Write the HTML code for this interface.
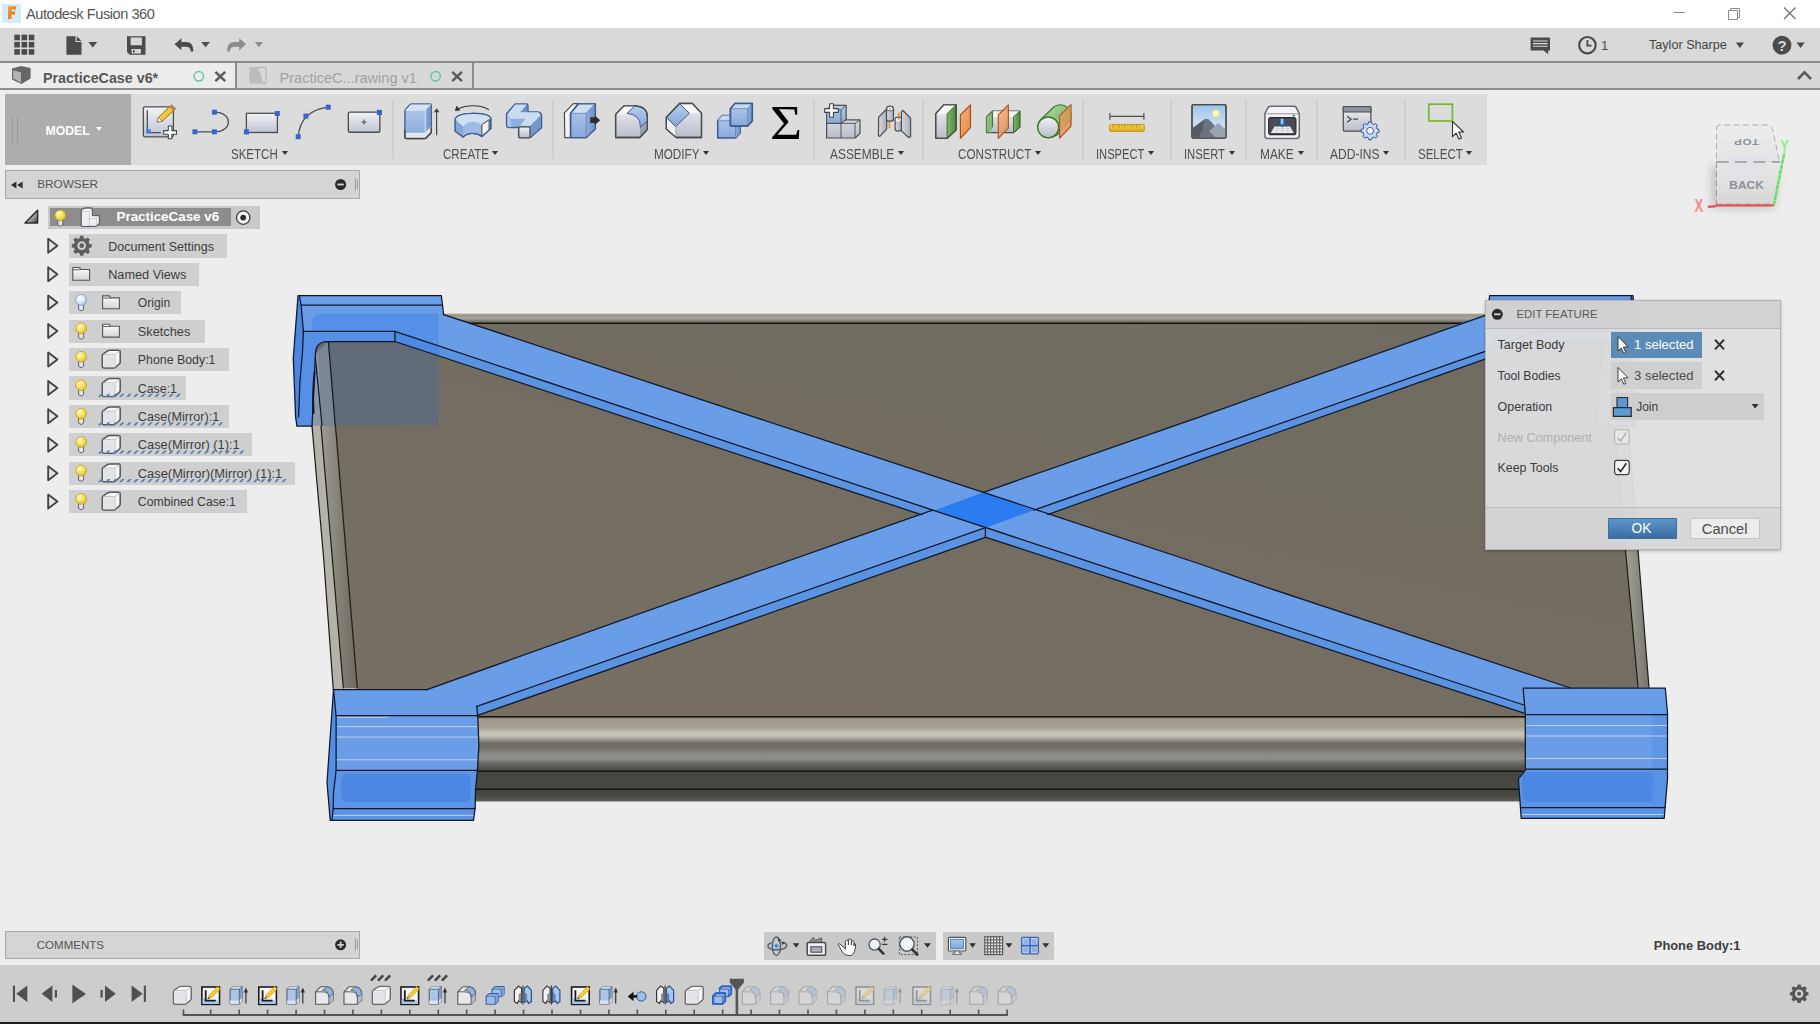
<!DOCTYPE html>
<html lang="en">
<head>
<meta charset="utf-8">
<title>Autodesk Fusion 360</title>
<style>
*{box-sizing:border-box;margin:0;padding:0}
html,body{width:1820px;height:1024px;overflow:hidden}
body{position:relative;background:#ededed;font-family:"Liberation Sans",sans-serif;color:#4a4a4a;font-size:12px}
.abs{position:absolute}
#titlebar{left:0;top:0;width:1820px;height:28px;background:#fff}
#titlebar .t{left:26px;top:4.2px;font-size:14.6px;color:#555;white-space:nowrap;line-height:20px}
#qat{left:0;top:28px;width:1820px;height:33px;background:#d9d9d9}
#qatline{left:0;top:61.2px;width:1820px;height:1.8px;background:#8a8a8a}
#tabbar{left:0;top:63px;width:1820px;height:25px;background:#d8d8d8}
#tabline{left:0;top:88px;width:1820px;height:1.5px;background:#8c8c8c}
#tab1{left:0;top:63px;width:235px;height:25px;background:#ececec}
.tabsep{top:63px;width:2px;height:25px;background:#8c8c8c}
.tabtxt{white-space:nowrap;line-height:20px}
#toolbar{left:5px;top:94px;width:1482.3px;height:71px;background:#dcdcdc}
#model{left:5px;top:94px;width:126px;height:71px;background:#adadad}
.tlabel{top:146.4px;font-size:14px;color:#4f4f4f;white-space:nowrap;line-height:16px;letter-spacing:0px}
.tsep{top:100px;width:2px;height:59px;background:#cfcfcf}
.caret{display:inline-block;width:0;height:0;border-left:4px solid transparent;border-right:4px solid transparent;border-top:5px solid #333;vertical-align:middle;margin-left:3px;position:relative;top:-2px}
#browserhdr{left:5px;top:170.4px;width:354.6px;height:28.2px;background:#d4d4d4;border:1px solid #a8a8a8}
#commentshdr{left:5px;top:930.8px;width:354.6px;height:28.4px;background:#d4d4d4;border:1px solid #a8a8a8}
.hdrtxt{font-size:12px;color:#555;line-height:16px;white-space:nowrap}
.row{height:22px;background:#cfcfcf}
.rowtxt{font-size:12px;color:#3c3c3c;white-space:nowrap;line-height:16px}
#timeline{left:0;top:965px;width:1820px;height:56.6px;background:#cdcdcd}
#bottomstrip{left:0;top:1021.6px;width:1820px;height:2.4px;background:#1e1e1e}
#dialog{left:1485px;top:300px;width:296px;height:250px;background:rgba(223,223,223,0.95);border:1px solid #b4b4b4;box-shadow:0 1px 3px rgba(0,0,0,0.25)}
.dlabel{font-size:12px;color:#3a3a3a;white-space:nowrap;line-height:16px}
#ttl{letter-spacing:-0.458px}
#usr{font-size:12.61px !important}
#t1{font-size:14.29px !important}
#t2{font-size:14.56px !important}
#modeltxt{font-size:12.24px !important}
#tl0{transform:scaleX(0.8222);transform-origin:0 0}
#tl1{transform:scaleX(0.8251);transform-origin:0 0}
#tl2{transform:scaleX(0.8356);transform-origin:0 0}
#tl3{transform:scaleX(0.8505);transform-origin:0 0}
#tl4{transform:scaleX(0.8340);transform-origin:0 0}
#tl5{transform:scaleX(0.7959);transform-origin:0 0}
#tl6{transform:scaleX(0.8005);transform-origin:0 0}
#tl7{transform:scaleX(0.8491);transform-origin:0 0}
#tl8{transform:scaleX(0.8617);transform-origin:0 0}
#tl9{transform:scaleX(0.8207);transform-origin:0 0}
#brtxt{font-size:11.78px !important}
#cmtxt{font-size:11.50px !important}
#roottxt{font-size:13.38px !important}
#r0{font-size:12.52px !important}
#r1{font-size:12.71px !important}
#r2{font-size:12.14px !important}
#r3{font-size:12.79px !important}
#r4{font-size:12.37px !important}
#r5{font-size:12.37px !important}
#r6{font-size:12.63px !important}
#r7{font-size:12.83px !important}
#r8{font-size:12.88px !important}
#r9{font-size:12.25px !important}
#dh{font-size:11.39px !important}
#d0{font-size:12.55px !important}
#d1{font-size:12.20px !important}
#d2{font-size:12.45px !important}
#d3{font-size:12.66px !important}
#d4{font-size:12.37px !important}
#s1{font-size:13.07px !important}
#s3{font-size:13.07px !important}
#jn{font-size:11.94px !important}
#okt{font-size:13.76px !important}
#cnt{font-size:14.68px !important}
#pb1{font-size:12.89px !important}
</style>
</head>
<body>
<svg class="abs" style="left:0;top:0" width="1820" height="1024" viewBox="0 0 1820 1024">
<defs>
<linearGradient id="gFace" x1="1" y1="0" x2="0.3" y2="1">
<stop offset="0" stop-color="#6e6b60"/><stop offset="0.5" stop-color="#736d61"/><stop offset="1" stop-color="#776f63"/>
</linearGradient>
<linearGradient id="gTop" x1="0" y1="0" x2="0" y2="1">
<stop offset="0" stop-color="#b9b7ae"/><stop offset="0.12" stop-color="#9c998d"/><stop offset="0.3" stop-color="#9a978b"/><stop offset="0.5" stop-color="#a9a8a2"/><stop offset="0.7" stop-color="#8a877c"/><stop offset="0.86" stop-color="#787367"/><stop offset="1" stop-color="#6f6a5f"/>
</linearGradient>
<linearGradient id="gCyl" x1="0" y1="0" x2="0" y2="1">
<stop offset="0" stop-color="#7a7468"/><stop offset="0.06" stop-color="#a39c8e"/><stop offset="0.19" stop-color="#a69f90"/><stop offset="0.3" stop-color="#c6c3bb"/><stop offset="0.33" stop-color="#cac7bf"/><stop offset="0.39" stop-color="#b0ada5"/><stop offset="0.5" stop-color="#6b675e"/><stop offset="0.57" stop-color="#74726a"/><stop offset="0.68" stop-color="#888a83"/><stop offset="0.77" stop-color="#8c8e87"/><stop offset="0.85" stop-color="#6a6963"/><stop offset="0.94" stop-color="#53514b"/><stop offset="1" stop-color="#4a4842"/>
</linearGradient>
<linearGradient id="gCyl2" x1="0" y1="0" x2="0" y2="1">
<stop offset="0" stop-color="#43413c"/><stop offset="0.5" stop-color="#494742"/><stop offset="0.85" stop-color="#58554e"/><stop offset="1" stop-color="#6a665e"/>
</linearGradient>
<linearGradient id="gLeft" x1="0" y1="0" x2="1" y2="0">
<stop offset="0" stop-color="#a5a39a"/><stop offset="1" stop-color="#6d685d"/>
</linearGradient>
<linearGradient id="gRight" x1="0" y1="0" x2="1" y2="0">
<stop offset="0" stop-color="#7d7a70"/><stop offset="0.5" stop-color="#a09e95"/><stop offset="1" stop-color="#77746a"/>
</linearGradient>
</defs>
<g stroke-linejoin="round">
<!-- phone top strip -->
<polygon points="318,313.5 1620,313.5 1620,323 318,323" fill="url(#gTop)"/>
<polygon points="318,313.5 1620,313.5 1620,323 318,323" fill="#7a7569" opacity="0"/>
<!-- phone main face -->
<polygon points="326,323 1606,323 1638.1,688 1640,717 360,717 357.4,688" fill="url(#gFace)"/>
<line x1="440" y1="323.2" x2="1490" y2="323.2" stroke="#15140f" stroke-width="1.4"/>
<!-- left side strips -->
<polygon points="311,345 317,345 343.4,688.5 333.3,690 323.8,560 312,426" fill="#b4b3aa"/>
<polygon points="315.2,352 328.4,341.7 357.4,688.5 343.4,688.5" fill="url(#gLeft)"/>
<path d="M312,426 L323.8,560 L333.3,690" fill="none" stroke="#1a1a16" stroke-width="1.2"/>
<path d="M315.2,358 L343.4,688.5" fill="none" stroke="#1a1a16" stroke-width="1.2"/>
<path d="M328.4,341.7 L357.4,688.5" fill="none" stroke="#1a1a16" stroke-width="1.2"/>
<!-- right side strip -->
<polygon points="1604.8,323 1619,315 1649,687.7 1638.1,687.7" fill="url(#gRight)"/>
<path d="M1604.8,323 L1625.6,551 L1638.1,687.7" fill="none" stroke="#1a1a16" stroke-width="1.2"/>
<path d="M1619,315 L1638.1,551 L1649,687.7" fill="none" stroke="#1a1a16" stroke-width="1.2"/>
<!-- cylinder bottom -->
<rect x="476" y="716.5" width="1050" height="55" fill="url(#gCyl)"/>
<rect x="475" y="771.4" width="1050" height="18" fill="#484640"/>
<rect x="474" y="789.2" width="1048" height="12.3" fill="url(#gCyl2)"/>
<line x1="476" y1="716.7" x2="1526" y2="716.7" stroke="#15140f" stroke-width="1.4"/>
<line x1="476" y1="771.2" x2="1526" y2="771.2" stroke="#15140f" stroke-width="1.4"/>
<line x1="475" y1="789.2" x2="1522" y2="789.2" stroke="#15140f" stroke-width="1.4"/>
</g>
<g stroke="none">
<!-- side faces -->
<polygon points="394.9,331.4 934.2,510.6 921.9,514.8 394.9,341.5" fill="#5b93e3"/>
<polygon points="986,527.7 1523.9,705 1523.9,713.2 986,537.3" fill="#5b93e3"/>
<polygon points="476.9,706.4 985.4,527.7 985.4,537.3 476.9,715.6" fill="#5b93e3"/>
<polygon points="1034,510.2 1484.4,351.6 1536.1,331.4 1536.1,341.5 1484.4,359.3 1047.7,514.6" fill="#5b93e3"/>
<!-- top faces -->
<polygon points="443.6,314.6 740,412.4 983.4,492.3 1200,564 1260,585.2 1570.4,688 1523.9,688 1523.9,705 394.9,331.4 394.9,320" fill="#6a9de8"/>
<polygon points="426.3,689.9 740,577.8 983.4,492.3 1200,416.8 1484.4,315.5 1487.4,314.6 1536.1,320 1536.1,331.4 1484.4,351.6 1200,451.7 1034,510.2 985.4,527.7 740,613.8 476.9,706.4 476.9,690" fill="#6a9de8"/>
<!-- crossing -->
<polygon points="983.4,492.3 1034,510.2 986,527.7 934.2,510.6" fill="#2b7cf0"/>
</g>
<!-- TOP-LEFT BLOCK -->
<g>
<polygon points="298,295.7 441.4,295.7 443.6,314.6 482,327.3 482,360.2 394.9,331.4 303.4,331.4 301.1,305" fill="#6a9de8"/>
<!-- L-shape inner/left -->
<path d="M298,295.7 L301.1,305 L303.4,331.4 L394.9,331.4 L394.9,341.5 L327,341.5 Q316,342 315.5,353 L312,426.1 L297,426.1 L295.6,417.5 L293.3,358.1 Z" fill="#5690e6"/>
<path d="M298,295.7 L293.3,358.1 L295.6,417.5 L297,426.1 L298.6,417 L300,381 L302.5,352 L303.4,331.4 L301.1,305 Z" fill="#4a86e2"/>
<!-- phone seen through (tinted) -->
<path d="M327,341.5 L438.5,341.5 L438.5,425.3 L312,425.3 L315.5,353 Q316,342 327,341.5 Z" fill="#616b78"/>
<polygon points="315.5,353 328.4,341.7 335.2,425.3 321,425.3" fill="#7b8693"/>
<polygon points="315.3,356 318,352 322,425.3 312.2,425.3" fill="#8b97a8"/>
<!-- darker tint on blue area -->
<path d="M312,331.4 L312,323 Q312,313.5 322,313.5 L438.5,313.5 L438.5,345.8 L394.9,331.4 Z" fill="#5690e6"/>
<polygon points="394.9,331.4 438.5,345.8 438.5,356 394.9,341.5" fill="#4c89e2"/>
<g fill="none" stroke="#101828" stroke-width="1.25" stroke-linejoin="round" stroke-linecap="round">
<path d="M297,426.1 L295.6,417.5 L293.3,358.1 L298,295.7 L441.4,295.7 L443.6,314.6"/>
<path d="M297,426.1 L312,426.1"/>
<path d="M301.1,305 L442.4,305"/>
<path d="M299.5,296.5 L301.1,305 L303.4,331.4 L302.5,352 L300,381 L298.6,417"/>
<path d="M303.4,331.4 L394.9,331.4 L394.9,341.5"/>
<path d="M394.9,341.5 L327,341.5 Q316,342 315.5,353 L312,426.1"/>
<path d="M328.4,341.7 L335.2,425.3" stroke="#0d1a2c"/>
<path d="M315.3,357 L322,425.3" stroke="#0d1a2c"/>
<path d="M314.6,372 Q312.2,395 313.6,413" stroke="#0a1630" stroke-width="2"/>
</g>
</g>
<!-- TOP-RIGHT BLOCK (behind dialog) -->
<g transform="translate(1931,0) scale(-1,1)">
<polygon points="298,295.7 441.4,295.7 443.6,314.6 482,327.3 482,360.2 394.9,331.4 303.4,331.4 301.1,305" fill="#6a9de8"/>
<!-- L-shape inner/left -->
<path d="M298,295.7 L301.1,305 L303.4,331.4 L394.9,331.4 L394.9,341.5 L327,341.5 Q316,342 315.5,353 L312,426.1 L297,426.1 L295.6,417.5 L293.3,358.1 Z" fill="#5690e6"/>
<path d="M298,295.7 L293.3,358.1 L295.6,417.5 L297,426.1 L298.6,417 L300,381 L302.5,352 L303.4,331.4 L301.1,305 Z" fill="#4a86e2"/>
<!-- phone seen through (tinted) -->
<path d="M327,341.5 L438.5,341.5 L438.5,425.3 L312,425.3 L315.5,353 Q316,342 327,341.5 Z" fill="#616b78"/>
<polygon points="315.5,353 328.4,341.7 335.2,425.3 321,425.3" fill="#7b8693"/>
<polygon points="315.3,356 318,352 322,425.3 312.2,425.3" fill="#8b97a8"/>
<!-- darker tint on blue area -->
<path d="M312,331.4 L312,323 Q312,313.5 322,313.5 L438.5,313.5 L438.5,345.8 L394.9,331.4 Z" fill="#5690e6"/>
<polygon points="394.9,331.4 438.5,345.8 438.5,356 394.9,341.5" fill="#4c89e2"/>
<g fill="none" stroke="#101828" stroke-width="1.25" stroke-linejoin="round" stroke-linecap="round">
<path d="M297,426.1 L295.6,417.5 L293.3,358.1 L298,295.7 L441.4,295.7 L443.6,314.6"/>
<path d="M297,426.1 L312,426.1"/>
<path d="M301.1,305 L442.4,305"/>
<path d="M299.5,296.5 L301.1,305 L303.4,331.4 L302.5,352 L300,381 L298.6,417"/>
<path d="M303.4,331.4 L394.9,331.4 L394.9,341.5"/>
<path d="M394.9,341.5 L327,341.5 Q316,342 315.5,353 L312,426.1"/>
<path d="M328.4,341.7 L335.2,425.3" stroke="#0d1a2c"/>
<path d="M315.3,357 L322,425.3" stroke="#0d1a2c"/>
<path d="M314.6,372 Q312.2,395 313.6,413" stroke="#0a1630" stroke-width="2"/>
</g>
</g>
<!-- BOTTOM-LEFT BLOCK -->
<g>
<path d="M333.5,689.5 L426.9,689.5 L456,680 L500,692 L476.7,706.4 L477.8,715.9 L478.9,745.9 L477.4,770.3 L475.5,789.8 L475.2,807.4 L473.5,820.3 L330.2,820.3 L327,782.5 Z" fill="#6a9de8"/>
<path d="M336.1,770.3 L477.4,770.3 L475.5,789.8 L475.2,808.6 L333.2,808.6 L333.5,792.7 Z" fill="#5c94e6"/>
<rect x="341" y="773.5" width="130" height="28.5" rx="7" fill="#4b88e3"/>
<path d="M333.2,808.6 L475.2,808.6 L473.5,820.3 L330.2,820.3 Z" fill="#5b93e5"/>
<path d="M333.5,689.5 L334.6,700.5 L336.1,715.9 L336.1,770.3 L333.5,792.7 L333.2,808.6 L332,819.8 L330.2,820.3 L327,782.5 Z" fill="#548fe5"/>
<g fill="none" stroke="#c3cddd" stroke-width="1">
<path d="M337,717.2 H388"/><path d="M337,726.6 H477.5"/><path d="M337,737.1 H478"/><path d="M337,759.8 H478"/><path d="M333,815.4 H474"/>
</g>
<g fill="none" stroke="#101828" stroke-width="1.25" stroke-linejoin="round" stroke-linecap="round">
<path d="M426.9,689.5 L333.5,689.5 L327,782.5 L330.2,820.3 L473.5,820.3 L475.2,807.4 L475.5,789.8 L477.4,770.3 L478.9,745.9 L477.8,715.9 L476.7,706.4"/>
<path d="M336.1,715.7 H477.8"/><path d="M336.1,770.3 H477.4"/><path d="M333.2,808.6 H475.2"/>
<path d="M333.5,689.5 L334.6,700.5 L336.1,715.9 L336.1,770.3 L333.5,792.7 L333.2,808.6 L332,819.8"/>
</g>
</g>
<!-- BOTTOM-RIGHT BLOCK -->
<g>
<path d="M1523.1,688 L1665.3,688 L1667.5,713 L1667.5,778.8 L1664.2,818.4 L1521.2,818.4 L1518.4,778.8 L1525.3,770.6 L1525.3,713 Z" fill="#6a9de8"/>
<path d="M1525.3,769.2 L1667.5,769.2 L1667.5,778.8 L1665,807.5 L1520.5,807.5 L1518.4,778.8 Z" fill="#5c94e6"/>
<rect x="1522" y="772" width="133" height="30" rx="7" fill="#4b88e3"/>
<path d="M1520.5,807.5 L1665,807.5 L1664.2,818.4 L1521.2,818.4 Z" fill="#5b93e5"/>
<path d="M1652,713 L1667.5,713 L1667.5,778.8 L1665,807.5 L1650,807.5 Q1654,790 1652,713 Z" fill="#5a93e6" opacity="0.7"/>
<g fill="none" stroke="#c3cddd" stroke-width="1">
<path d="M1526,725.5 H1667"/><path d="M1526,736 H1667"/><path d="M1526,758.5 H1667"/><path d="M1522,814.5 H1664"/>
</g>
<g fill="none" stroke="#101828" stroke-width="1.25" stroke-linejoin="round" stroke-linecap="round">
<path d="M1523.1,688 L1665.3,688 L1667.5,713 L1667.5,778.8 L1664.2,818.4 L1521.2,818.4 L1518.4,778.8 L1525.3,770.6 L1525.3,713 Z"/>
<path d="M1525.3,714.5 H1667.5"/><path d="M1525.3,769.2 H1667.5"/><path d="M1520.5,807.5 H1665"/>
</g>
</g>

<g fill="none" stroke="#101828" stroke-width="1.25" stroke-linecap="round">
<polyline points="443.6,314.6 740,412.4 983.4,492.3 1200,564 1260,585.2 1570.4,688"/>
<polyline points="394.9,331.4 934.2,510.6 986,527.7 1523.9,705"/>
<polyline points="394.9,341.5 921.9,514.8"/>
<polyline points="986,537.3 1523.9,713.2"/>
<polyline points="426.3,689.9 740,577.8 932.6,510.2"/><polyline points="983.4,492.3 1200,416.8 1487.4,314.6"/>
<polyline points="476.9,706.4 740,613.8 985.4,527.7 985.4,537.3"/>
<polyline points="1034,510.2 1200,451.7 1484.4,351.6 1536.1,331.4"/>
<polyline points="476.9,715.6 740,623.6 985.4,537.3"/>
<polyline points="1047.7,514.6 1200,459.9 1484.4,359.3 1536.1,341.5"/>
</g>

</svg>


<!-- TITLE BAR -->
<div id="titlebar" class="abs">
<svg class="abs" style="left:2px;top:4px" width="19" height="19" viewBox="0 0 19 19"><defs><linearGradient id="gF" x1="0" y1="0" x2="1" y2="1"><stop offset="0" stop-color="#f9a23a"/><stop offset="1" stop-color="#d96a12"/></linearGradient></defs><rect width="19" height="19" fill="#d3ebf6"/><path d="M6,2.2 L14,2.2 L14,5.4 L9.6,5.4 L9.6,7.6 L13,7.6 L13,10.6 L9.6,10.6 L9.6,14.6 L6,15.4 Z" fill="url(#gF)"/></svg>
<div class="abs t" id="ttl">Autodesk Fusion 360</div>
<svg class="abs" style="left:1668px;top:2px" width="140" height="24" viewBox="0 0 140 24" fill="none" stroke="#8a8a8a" stroke-width="1"><path d="M5.5,10.5 H17"/><path d="M60.5,8.5 H69.5 V17.5 H60.5 Z M62.5,8.5 V6.5 H71.5 V15.5 H69.5"/><path d="M116,5.5 L127.5,17 M127.5,5.5 L116,17" stroke="#6a6a6a" stroke-width="1.1"/></svg>
</div>
<!-- QAT -->
<div id="qat" class="abs"></div>
<div id="qatline" class="abs"></div>
<svg class="abs" style="left:0;top:28px" width="1820" height="33" viewBox="0 28 1820 33">
<g fill="#4b4b4b">
<rect x="14.3" y="34.7" width="5.6" height="5.6"/><rect x="21.5" y="34.7" width="5.6" height="5.6"/><rect x="28.7" y="34.7" width="5.6" height="5.6"/>
<rect x="14.3" y="41.9" width="5.6" height="5.6"/><rect x="21.5" y="41.9" width="5.6" height="5.6"/><rect x="28.7" y="41.9" width="5.6" height="5.6"/>
<rect x="14.3" y="49.1" width="5.6" height="5.6"/><rect x="21.5" y="49.1" width="5.6" height="5.6"/><rect x="28.7" y="49.1" width="5.6" height="5.6"/>
<path d="M66.4,36.2 H75.6 V42 H81.5 V54.7 H66.4 Z M76.8,36.2 L81.5,40.9 H76.8 Z"/>
<path d="M88.4,42 H97.2 L92.8,47.4 Z"/>
<path d="M127,36.2 H145.5 V54.7 H129.6 L127,52.1 Z M130.6,37.6 V45.2 H141.9 V37.6 Z M131.6,49 V53.4 H140.9 V49 Z" fill-rule="evenodd"/>
<rect x="133" y="50" width="1.6" height="2.6"/>
<path d="M174.5,44.2 L181.4,38.2 V42 H186 C191,42 193.3,44.6 193.3,51.6 H190.7 C190.5,47.8 189,46.7 185,46.7 H181.4 V50.2 Z"/>
<path d="M201.3,42 H210 L205.6,47.3 Z"/>
</g>
<g fill="#8c8c8c">
<path d="M246.1,44.2 L239.2,38.2 V42 H234.6 C229.6,42 227.3,44.6 227.3,51.6 H229.9 C230.1,47.8 231.6,46.7 235.6,46.7 H239.2 V50.2 Z"/>
<path d="M254.8,42 H263 L258.9,47.3 Z"/>
</g>
<!-- right side -->
<g fill="#4b4b4b">
<path d="M1530.6,37.4 H1550 V50.6 H1548.2 V54.3 L1543.6,50.6 H1530.6 Z"/>
<path d="M1735.8,42.5 H1744 L1739.9,48 Z"/>
<circle cx="1782" cy="45.2" r="9.4"/>
<path d="M1796.5,42.5 H1804.8 L1800.6,48 Z"/>
</g>
<g stroke="#d9d9d9" stroke-width="1.1"><path d="M1533,41 H1547.6 M1533,43.6 H1547.6 M1533,46.2 H1547.6"/></g>
<circle cx="1587.4" cy="45.2" r="8.2" fill="none" stroke="#4b4b4b" stroke-width="2.2"/>
<path d="M1587.4,40 V45.6 H1591.6" fill="none" stroke="#4b4b4b" stroke-width="1.8"/>
<text x="1601" y="50" font-size="13" fill="#4b4b4b" font-family="Liberation Sans, sans-serif">1</text>
<text x="1777.6" y="50.6" font-size="15" font-weight="bold" fill="#d9d9d9" font-family="Liberation Sans, sans-serif">?</text>
</svg>
<div class="abs" id="usr" style="left:1649px;top:36px;font-size:13px;color:#444;white-space:nowrap;line-height:18px">Taylor Sharpe</div>
<!-- TAB BAR -->
<div id="tabbar" class="abs"></div>
<div id="tab1" class="abs"></div>
<div class="abs tabsep" style="left:235px"></div>
<div class="abs tabsep" style="left:472px"></div>
<div id="tabline" class="abs"></div>
<svg class="abs" style="left:0;top:63px" width="1820" height="25" viewBox="0 63 1820 25">
<path d="M12,68.6 L21.4,66 L30.6,68 V78.6 L21.4,84 L12,79.4 Z" fill="#666"/>
<path d="M13.2,70.2 L21,72.6 V82.4 L13.2,78.6 Z" fill="#b4b4b4"/>
<circle cx="198.8" cy="76.3" r="4.7" fill="none" stroke="#5fc4ab" stroke-width="1.5"/>
<path d="M215.4,71.8 L225.2,81.2 M225.2,71.8 L215.4,81.2" stroke="#5a5a5a" stroke-width="2.4" fill="none"/>
<path d="M249.4,67 H258 L263.4,83.4 H249.4 Z" fill="#bcbcbc"/>
<path d="M258,67.4 H266 V83.4 H263" fill="none" stroke="#b0b0b0" stroke-width="1"/>
<circle cx="435.6" cy="76.3" r="4.7" fill="none" stroke="#5fc4ab" stroke-width="1.5"/>
<path d="M452.2,71.8 L462,81.2 M462,71.8 L452.2,81.2" stroke="#5a5a5a" stroke-width="2.4" fill="none"/>
<path d="M1798,79 L1804.5,72.4 L1811,79" stroke="#5a5a5a" stroke-width="2.6" fill="none"/>
</svg>
<div class="abs tabtxt" id="t1" style="left:43px;top:67.6px;font-size:15px;font-weight:bold;color:#585858">PracticeCase v6*</div>
<div class="abs tabtxt" id="t2" style="left:279.5px;top:67.8px;font-size:15px;color:#a2a2a2">PracticeC...rawing v1</div>
<div id="toolbar" class="abs"></div>
<div id="model" class="abs"></div>
<div class="abs" style="left:11.5px;top:115px;width:1.2px;height:28px;background:#999"></div><div class="abs" style="left:16.6px;top:115px;width:1.2px;height:28px;background:#999"></div>
<div class="abs" id="modeltxt" style="left:45.5px;top:122.5px;font-size:13px;font-weight:bold;color:#fff;white-space:nowrap;line-height:16px">MODEL</div>
<div class="abs" style="left:96.3px;top:127.4px;width:0;height:0;border-left:3.8px solid transparent;border-right:3.8px solid transparent;border-top:4.4px solid #fff"></div>
<div class="abs tsep" style="left:391.5px"></div>
<div class="abs tsep" style="left:551.6px"></div>
<div class="abs tsep" style="left:813.2px"></div>
<div class="abs tsep" style="left:922.3000000000001px"></div>
<div class="abs tsep" style="left:1082.2px"></div>
<div class="abs tsep" style="left:1169.9px"></div>
<div class="abs tsep" style="left:1245.4px"></div>
<div class="abs tsep" style="left:1315.9px"></div>
<div class="abs tsep" style="left:1403.6000000000001px"></div>
<div class="abs tlabel" id="tl0" style="left:231.3px">SKETCH</div>
<div class="abs" style="left:281.5px;top:150.8px;width:0;height:0;border-left:3.6px solid transparent;border-right:3.6px solid transparent;border-top:4.5px solid #333"></div>
<div class="abs tlabel" id="tl1" style="left:442.7px">CREATE</div>
<div class="abs" style="left:492.2px;top:150.8px;width:0;height:0;border-left:3.6px solid transparent;border-right:3.6px solid transparent;border-top:4.5px solid #333"></div>
<div class="abs tlabel" id="tl2" style="left:653.7px">MODIFY</div>
<div class="abs" style="left:702.6999999999999px;top:150.8px;width:0;height:0;border-left:3.6px solid transparent;border-right:3.6px solid transparent;border-top:4.5px solid #333"></div>
<div class="abs tlabel" id="tl3" style="left:829.8px">ASSEMBLE</div>
<div class="abs" style="left:897.5px;top:150.8px;width:0;height:0;border-left:3.6px solid transparent;border-right:3.6px solid transparent;border-top:4.5px solid #333"></div>
<div class="abs tlabel" id="tl4" style="left:958px">CONSTRUCT</div>
<div class="abs" style="left:1034.8000000000002px;top:150.8px;width:0;height:0;border-left:3.6px solid transparent;border-right:3.6px solid transparent;border-top:4.5px solid #333"></div>
<div class="abs tlabel" id="tl5" style="left:1096.2px">INSPECT</div>
<div class="abs" style="left:1148.0px;top:150.8px;width:0;height:0;border-left:3.6px solid transparent;border-right:3.6px solid transparent;border-top:4.5px solid #333"></div>
<div class="abs tlabel" id="tl6" style="left:1184.2px">INSERT</div>
<div class="abs" style="left:1228.6000000000001px;top:150.8px;width:0;height:0;border-left:3.6px solid transparent;border-right:3.6px solid transparent;border-top:4.5px solid #333"></div>
<div class="abs tlabel" id="tl7" style="left:1260.3px">MAKE</div>
<div class="abs" style="left:1297.5px;top:150.8px;width:0;height:0;border-left:3.6px solid transparent;border-right:3.6px solid transparent;border-top:4.5px solid #333"></div>
<div class="abs tlabel" id="tl8" style="left:1329.8px">ADD-INS</div>
<div class="abs" style="left:1382.9px;top:150.8px;width:0;height:0;border-left:3.6px solid transparent;border-right:3.6px solid transparent;border-top:4.5px solid #333"></div>
<div class="abs tlabel" id="tl9" style="left:1417.8px">SELECT</div>
<div class="abs" style="left:1466.0px;top:150.8px;width:0;height:0;border-left:3.6px solid transparent;border-right:3.6px solid transparent;border-top:4.5px solid #333"></div>
<svg class="abs" style="left:0;top:94px" width="1820" height="71" viewBox="0 94 1820 71">
<defs>
<linearGradient id="gPan" x1="0" y1="0" x2="0" y2="1"><stop offset="0" stop-color="#f2f3f7"/><stop offset="1" stop-color="#bfc4d2"/></linearGradient>
<linearGradient id="gBlu" x1="0" y1="0" x2="0" y2="1"><stop offset="0" stop-color="#b4cdec"/><stop offset="1" stop-color="#86a9da"/></linearGradient>
<linearGradient id="gBluS" x1="0" y1="0" x2="1" y2="0"><stop offset="0" stop-color="#8fb0de"/><stop offset="1" stop-color="#6c8fc6"/></linearGradient>
<linearGradient id="gGry" x1="0" y1="0" x2="0" y2="1"><stop offset="0" stop-color="#f0f1f4"/><stop offset="1" stop-color="#b9bdc9"/></linearGradient>
<linearGradient id="gGryS" x1="0" y1="0" x2="1" y2="0"><stop offset="0" stop-color="#d5d8e0"/><stop offset="1" stop-color="#a9adb9"/></linearGradient>
<linearGradient id="gGrn" x1="0" y1="0" x2="1" y2="0"><stop offset="0" stop-color="#7fb56a"/><stop offset="1" stop-color="#4f8f3c"/></linearGradient>
<linearGradient id="gOrg" x1="0" y1="0" x2="1" y2="1"><stop offset="0" stop-color="#f6b184"/><stop offset="1" stop-color="#e58544"/></linearGradient>
<linearGradient id="gSky" x1="0" y1="0" x2="0" y2="1"><stop offset="0" stop-color="#9cc4ec"/><stop offset="1" stop-color="#e8f1fa"/></linearGradient>
<linearGradient id="gYel" x1="0" y1="0" x2="0" y2="1"><stop offset="0" stop-color="#f7d54a"/><stop offset="1" stop-color="#e0a81c"/></linearGradient>
</defs>
<g transform="translate(142.8,105.2) scale(1.0)"><rect x="0.6" y="1.6" width="30" height="30" rx="1.5" fill="url(#gPan)" stroke="#4d4d4d" stroke-width="1.3"/>
<path d="M4.5,5 V27.5 H18" fill="none" stroke="#4d4d4d" stroke-width="1.3"/>
<rect x="3.6" y="24" width="4.2" height="4.2" fill="#3f7fe0"/>
<path d="M14.2,16.8 L15.6,12.2 L27,1.2 L31.2,5.2 L19.4,16 Z" fill="#f5c738" stroke="#7a5a1a" stroke-width="0.8"/>
<path d="M14.2,16.8 L15.6,12.2 L19.4,16 Z" fill="#fff" stroke="#7a5a1a" stroke-width="0.6"/>
<path d="M27,1.2 L28.8,-0.4 L33,3.6 L31.2,5.2 Z" fill="#d9884a" stroke="#7a5a1a" stroke-width="0.6"/>
<polygon points="25.5,20.8 29.1,20.8 29.1,25.4 33.7,25.4 33.7,29.0 29.1,29.0 29.1,33.6 25.5,33.6 25.5,29.0 20.9,29.0 20.9,25.4 25.5,25.4" fill="#fff" stroke="#444" stroke-width="1.1" stroke-linejoin="round"/></g>
<g transform="translate(193.4,109) scale(1.0)"><path d="M1.5,22.8 H21 C39.6,22.8 39.6,3.2 21,3.2" fill="none" stroke="#4d4d4d" stroke-width="1.3"/><rect x="-1.0" y="20.3" width="5.0" height="5.0" fill="#3a66cc"/><rect x="18.5" y="20.3" width="5.0" height="5.0" fill="#3a66cc"/><rect x="18.5" y="0.7000000000000002" width="5.0" height="5.0" fill="#3a66cc"/></g>
<g transform="translate(243.9,110.7) scale(1.0)"><rect x="2.5" y="2.6" width="31" height="19.2" fill="url(#gPan)" stroke="#4d4d4d" stroke-width="1.3"/><rect x="0.0" y="18.7" width="5.0" height="5.0" fill="#3a66cc"/><rect x="30.9" y="0.2999999999999998" width="5.0" height="5.0" fill="#3a66cc"/></g>
<g transform="translate(295.7,104.7) scale(1.0)"><path d="M2.5,32 C4,16 12,5 32.5,2.5" fill="none" stroke="#4d4d4d" stroke-width="1.3"/><rect x="0.0" y="29.5" width="5.0" height="5.0" fill="#3a66cc"/><rect x="7.699999999999999" y="8.9" width="5.0" height="5.0" fill="#3a66cc"/><rect x="30.0" y="0.0" width="5.0" height="5.0" fill="#3a66cc"/></g>
<g transform="translate(347.5,110.2) scale(1.03)"><rect x="0.8" y="1.8" width="30.6" height="19.6" rx="1.5" fill="url(#gPan)" stroke="#4d4d4d" stroke-width="1.3"/><path d="M16,9 V14 M13.5,11.5 H18.5" stroke="#4d4d4d" stroke-width="1"/><rect x="28.5" y="-0.2999999999999998" width="5.0" height="5.0" fill="#3a66cc"/></g>
<g transform="translate(404.6,104.5) scale(0.985)"><path d="M0.3,7 Q0.3,5.8 1.2,4.9 L5.2,0.4 Q6,-0.6 7.2,-0.6 H25.8 Q27.1,-0.6 27.1,0.8 V27.4 Q27.1,28.4 26.4,29.2 L22.2,33.6 Q21.4,34.6 20,34.6 H1.8 Q0.3,34.6 0.3,33 Z" fill="url(#gBlu)" stroke="#4a6490" stroke-width="1.5" stroke-linejoin="round"/>
<path d="M1,5.8 L6.3,0 H26.4 L21,5.8 Z" fill="#d4e3f5"/>
<path d="M21,5.8 L26.4,0 V28 L21,34 Z" fill="url(#gBluS)"/>
<path d="M1,28.7 H21 L26.4,22.6 V28 L21,34 H1 Z" fill="#e4e7ee"/>
<path d="M1,5.8 H21 V34 M21,5.8 L26.4,0" fill="none" stroke="#dbe7f6" stroke-width="0.9"/>
<path d="M0.3,26 V33 Q0.3,34.6 1.8,34.6 H20 Q21.4,34.6 22.2,33.6 L26.4,29.2 Q27.1,28.4 27.1,27.4 V24" fill="none" stroke="#444" stroke-width="1.5" stroke-linejoin="round"/>
<path d="M32.5,31.2 V6" stroke="#444" stroke-width="1.2"/><path d="M29.6,7.9 L32.5,3.8 L35.6,7.9 Z" fill="#444"/></g>
<g transform="translate(454.6,104.6) scale(1.0)"><path d="M34.2,5.2 C26,0 12,0 3.6,4.4" fill="none" stroke="#333" stroke-width="1.1"/><path d="M0.2,6.5 L1.9,0.9 L5.8,5.8 Z" fill="#333"/>
<path d="M0.6,14.1 C4,7.2 33,7.2 36.2,13.4 V24 L27.3,31.9 C22,27.6 13,27.8 8.5,32.5 L0.6,26.6 Z" fill="#a3c1e7" stroke="#3f5f94" stroke-width="1.3" stroke-linejoin="round"/>
<path d="M0.6,14.1 C4,7.2 33,7.2 36.2,13.4 L27.3,20 C22,15.4 13,15.6 8.5,21.3 Z" fill="#cfe0f3"/>
<path d="M0.6,14.1 L8.5,21.3 V32.5 L0.6,26.6 Z" fill="#86a8d8"/>
<path d="M8.5,21.3 C13,15.6 22,15.4 27.3,20 V31.9 C22,27.6 13,27.8 8.5,32.5 Z" fill="#9dbce5"/>
<path d="M27.3,20 L34.5,15.1 V25.3 L27.3,31.9 Z" fill="#f4f4f6" stroke="#444" stroke-width="1"/>
<path d="M0.6,14.1 L8.5,21.3 C13,15.6 22,15.4 27.3,20" fill="none" stroke="#dbe8f7" stroke-width="0.9"/>
<path d="M0.6,14.1 C4,7.2 33,7.2 36.2,13.4 V24 L27.3,31.9 C22,27.6 13,27.8 8.5,32.5 L0.6,26.6 Z" fill="none" stroke="#3f5f94" stroke-width="1.2" stroke-linejoin="round"/></g>
<g transform="translate(505.9,104) scale(1.0)"><path d="M9.3,0 H20.6 Q22,0 22,1.4 V7.9 H32 Q35.6,8.6 35.6,12 V23.6 L25.1,33 H12.8 V23.6 H3.4 Q0.7,23.4 0.7,21 V9.8 Z" fill="#8fb0de" stroke="#3f5f94" stroke-width="1.5" stroke-linejoin="round"/>
<path d="M9.3,0.4 H21.1 L14.2,8.2 H32.3 Q34.6,9.4 34.3,11.8 L24.4,21.7 H13.9 L19.8,14.7 H5.3 L1.6,10.4 Z" fill="#c9dcf3"/>
<path d="M21.1,0.6 L21.6,7.9 H14.6 Z" fill="#6c8fc6"/>
<path d="M34.6,12 L34.9,23.4 L25.1,32.4 L24.4,22 Z" fill="#7395cc"/>
<path d="M1.4,10.6 L5.3,14.7 V23 H3 Q1.4,22.6 1.4,21 Z" fill="#a9c5ea"/>
<rect x="12.9" y="22.8" width="11.2" height="11" rx="0.8" fill="url(#gGry)" stroke="#444" stroke-width="1.2"/></g>
<g transform="translate(564,104) scale(1.0)"><path d="M0.4,8.8 L9.4,-0.4 H14 L6.4,9.3 V33.6 H0.8 Z" fill="#f4f5f7" stroke="#4a4a4a" stroke-width="1.2" stroke-linejoin="round"/>
<path d="M6.6,9.3 L14.7,-0.2 H31.4 V24.9 L22.2,33.6 H6.6 Z" fill="url(#gBlu)" stroke="#3f5a8c" stroke-width="1.3" stroke-linejoin="round"/>
<path d="M6.6,9.3 L14.7,-0.2 H31.4 L22.2,9.3 Z" fill="#cfe0f4"/>
<path d="M22.2,9.3 L31.4,-0.2 V24.9 L22.2,33.6 Z" fill="url(#gBluS)"/>
<path d="M6.6,9.3 H22.2 V33.6 M22.2,9.3 L31.4,-0.2" fill="none" stroke="#5f7fb4" stroke-width="0.8"/>
<path d="M6.6,9.3 L14.7,-0.2 H31.4 V24.9 L22.2,33.6 H6.6 Z" fill="none" stroke="#3f5a8c" stroke-width="1.3" stroke-linejoin="round"/>
<path d="M26.2,13.3 H30.8 V11.4 L36.2,16.2 L30.8,21 V19.1 H26.2 Z" fill="#2e2e2e"/></g>
<g transform="translate(615,104.4) scale(1.0)"><path d="M0.6,10.1 L9.2,1.4 H20.8 Q32.3,2.4 32.3,12.4 V25.1 L24.8,33.1 H0.6 Z" fill="url(#gGry)" stroke="#4a4a4a" stroke-width="1.3" stroke-linejoin="round"/>
<path d="M0.6,10.1 L9.2,1.4 H19.6 L12.1,8.9 Q10,10.2 0.6,10.1 Z" fill="#f7f7f9"/>
<path d="M25,22.4 L32.3,16.6 V25.1 L24.8,33.1 Z" fill="#9aa0ac"/>
<path d="M12.1,8.9 L19.6,1.6 Q32.3,2.2 32.3,12.4 V16.6 L25.4,22.8 Q25.6,10.2 12.1,8.9 Z" fill="url(#gBlu)" stroke="#3f5a8c" stroke-width="1" stroke-linejoin="round"/>
<path d="M0.6,10.1 L9.2,1.4 H20.8 Q32.3,2.4 32.3,12.4 V25.1 L24.8,33.1 H0.6 Z" fill="none" stroke="#4a4a4a" stroke-width="1.3" stroke-linejoin="round"/></g>
<g transform="translate(665.6,103.6) scale(1.0)"><path d="M0.75,13.7 L14,-0.1 H26.7 L35.9,9.7 V33.9 H10.6 L0.75,25.3 Z" fill="url(#gGry)" stroke="#4a4a4a" stroke-width="1.3" stroke-linejoin="round"/>
<path d="M14,-0.1 H26.7 L35.9,9.7 H23.8 Z" fill="#f7f7f9"/>
<path d="M0.75,13.7 L10,23 L10.6,33.9 L0.75,25.3 Z" fill="#eef0f4"/>
<path d="M0.75,13.7 L14,0.2 L23.8,9.7 L10,23 Z" fill="url(#gBlu)" stroke="#3f5a8c" stroke-width="1" stroke-linejoin="round"/>
<path d="M10,23 L10.6,33.9" fill="none" stroke="#9a9ea8" stroke-width="0.8"/>
<path d="M0.75,13.7 L14,-0.1 H26.7 L35.9,9.7 V33.9 H10.6 L0.75,25.3 Z" fill="none" stroke="#4a4a4a" stroke-width="1.3" stroke-linejoin="round"/></g>
<g transform="translate(717.4,104) scale(1.0)"><path d="M0.3,16.8 L4.9,11.6 H22.8 V28.9 L18.2,34.1 H0.3 Z" fill="url(#gBlu)" stroke="#3f5a8c" stroke-width="1.5" stroke-linejoin="round"/>
<path d="M0.3,16.8 L4.9,11.6 H22.8 L18.2,16.8 Z" fill="#c5d9f2"/><path d="M18.2,16.8 L22.8,11.6 V28.9 L18.2,34.1 Z" fill="url(#gBluS)"/>
<path d="M0.3,16.8 H18.2 V34.1" fill="none" stroke="#5f7fb4" stroke-width="0.8"/>
<path d="M13,4.7 L17.6,-0.5 H34.9 V16.8 L30.3,22 H13 Z" fill="url(#gBlu)" stroke="#3f5a8c" stroke-width="1.5" stroke-linejoin="round"/>
<path d="M13,4.7 L17.6,-0.5 H34.9 L30.3,4.7 Z" fill="#c5d9f2"/><path d="M30.3,4.7 L34.9,-0.5 V16.8 L30.3,22 Z" fill="url(#gBluS)"/>
<path d="M13,4.7 H30.3 V22 M30.3,4.7 L34.9,-0.5" fill="none" stroke="#5f7fb4" stroke-width="0.8"/>
<path d="M13,4.7 L17.6,-0.5 H34.9 V16.8 L30.3,22 H13 Z" fill="none" stroke="#3f5a8c" stroke-width="1.5" stroke-linejoin="round"/></g>
<g transform="translate(771.3,105) scale(1.0)"><g transform="scale(1.2,1.06)"><text x="-1" y="31.8" font-family="Liberation Serif, serif" font-size="46" fill="#000">Σ</text></g></g>
<g transform="translate(824.6,103.4) scale(1.0)"><path d="M2,6.6 L7,2 H21.4 V16.4 H35.4 V30 L30.4,34.6 H2 Z" fill="url(#gGry)" stroke="#4d4d4d" stroke-width="1.2" stroke-linejoin="round"/>
<path d="M2,6.6 L7,2 H21.4 V16.4 L16.4,20 H2 Z" fill="url(#gBlu)" stroke="#4d4d4d" stroke-width="0.9"/>
<path d="M2,20 H30.4 V34.6 M16.4,20 V34.6 M30.4,20 L35.4,16.4 M16.4,20 L21.4,16.4 M16.4,6.6 V20 M2,6.6 H16.4 L21.4,2" fill="none" stroke="#4d4d4d" stroke-width="0.9"/>
<polygon points="5.0,0.3 8.8,0.3 8.8,5.2 13.7,5.2 13.7,9.0 8.8,9.0 8.8,13.9 5.0,13.9 5.0,9.0 0.1,9.0 0.1,5.2 5.0,5.2" fill="#fff" stroke="#444" stroke-width="1.1" stroke-linejoin="round"/></g>
<g transform="translate(877.8,104.6) scale(1.0)"><path d="M0.8,12.5 L8.9,4.4 V24.4 L2.1,31.8 L0.6,31 Z" fill="url(#gGryS)" stroke="#4d4d4d" stroke-width="1.2" stroke-linejoin="round"/>
<path d="M8.7,4 Q8.7,1.4 12.2,1.4 Q15.7,1.4 15.7,4 V14.6 Q15.7,16.6 12.2,16.6 Q8.7,16.6 8.7,14.6 Z" fill="url(#gGryS)" stroke="#4d4d4d" stroke-width="1.2"/>
<ellipse cx="12.2" cy="4" rx="3.2" ry="2.2" fill="#fafafa" stroke="#4d4d4d" stroke-width="0.8"/><circle cx="12.2" cy="4" r="0.7" fill="#444"/>
<path d="M11.6,17.4 V23.6" stroke="#f58220" stroke-width="1.5"/>
<path d="M23.6,7.2 L25.2,5.9 L32.8,13.5 V32.3 L30.8,32.9 L23.6,26.3 Z" fill="url(#gGryS)" stroke="#4d4d4d" stroke-width="1.2" stroke-linejoin="round"/>
<path d="M17.3,15 Q17.3,12.6 20.5,12.6 Q23.6,12.6 23.6,15 V24.4 Q23.6,26.6 20.5,26.6 Q17.3,26.6 17.3,24.4 Z" fill="url(#gGryS)" stroke="#4d4d4d" stroke-width="1.2"/>
<ellipse cx="20.5" cy="15" rx="2.8" ry="1.8" fill="#f4f4f6"/>
<path d="M20.9,8.2 V15.1" stroke="#f58220" stroke-width="1.5"/></g>
<g transform="translate(935.2,104.6) scale(1.0)"><path d="M0.5,9.1 L8.8,0.2 H20.8 V25.5 L11.9,33.7 H0.5 Z" fill="url(#gGry)" stroke="#4a4a4a" stroke-width="1.3" stroke-linejoin="round"/>
<path d="M0.5,9.1 L8.8,0.2 H20.8 L11.9,9.1 Z" fill="#fafafb"/>
<path d="M11.9,9.1 L20.8,0.2 V25.5 L11.9,33.7 Z" fill="url(#gGrn)" stroke="#2f6b24" stroke-width="0.9" stroke-linejoin="round"/>
<path d="M0.5,9.1 L8.8,0.2 H20.8 V25.5 L11.9,33.7 H0.5 Z" fill="none" stroke="#4a4a4a" stroke-width="1.3" stroke-linejoin="round"/>
<path d="M25.2,10.4 L35.3,0.2 V23 L25.2,33.7 Z" fill="url(#gOrg)" stroke="#a8501a" stroke-width="1.2" stroke-linejoin="round"/></g>
<g transform="translate(985.8,104.6) scale(1.0)"><path d="M0.7,12.3 L6.8,6.6 H34 V22.4 L27.7,28 H0.7 Z" fill="url(#gGry)" stroke="#4a4a4a" stroke-width="1.2" stroke-linejoin="round"/>
<path d="M0.7,12.3 L6.8,6.6 H34 L27.7,12.3 Z" fill="#f7f7f9"/>
<path d="M27.7,12.3 L34,6.6 V22.4 L27.7,28 Z" fill="url(#gGrn)" stroke="#2f6b24" stroke-width="0.9" stroke-linejoin="round"/>
<path d="M0.7,12.3 L6.8,6.6 V22.4 L0.7,28 Z" fill="url(#gGrn)" fill-opacity="0.75" stroke="#2f6b24" stroke-width="0.9" stroke-linejoin="round"/>
<path d="M0.7,12.3 H6 V28 H0.7 Z" fill="#8fbf7c" fill-opacity="0.6"/>
<path d="M12.5,10.4 L22.6,0.2 V23.6 L12.5,33.7 Z" fill="url(#gOrg)" fill-opacity="0.82" stroke="#b5571c" stroke-width="1.2" stroke-linejoin="round"/></g>
<g transform="translate(1037,104.4) scale(1.0)"><defs><linearGradient id="gGrnL" x1="0" y1="0" x2="1" y2="1"><stop offset="0" stop-color="#c2deb2"/><stop offset="1" stop-color="#5f9d4a"/></linearGradient></defs>
<path d="M3.4,15.6 L17,2.4 Q24,-2 30.6,3 Q35.4,8 33.4,15 L20.4,30.4 Q10,37 2.6,28 Q-1.4,21 3.4,15.6 Z" fill="url(#gGrnL)" stroke="#3a7a2c" stroke-width="1.2"/>
<circle cx="11.2" cy="23" r="10.4" fill="url(#gGry)" stroke="#3a7a2c" stroke-width="1.3"/>
<path d="M22.6,11.6 L34,0.2 V21.7 L22.6,33.7 Z" fill="url(#gOrg)" fill-opacity="0.85" stroke="#a8501a" stroke-width="1.2" stroke-linejoin="round"/>
<path d="M22.6,11.6 L34,0.2 V13 L22.6,24 Z" fill="#b9a24a" fill-opacity="0.45"/></g>
<g transform="translate(1108.9,112.4) scale(1.0)"><path d="M1,4 H35 M1,0.6 V7.4 M35,0.6 V7.4" stroke="#4d4d4d" stroke-width="1.2" fill="none"/>
<rect x="0.6" y="12" width="34.8" height="7" rx="1" fill="url(#gYel)" stroke="#b98a14" stroke-width="0.8"/>
<path d="M4,12.4 V15 M7,12.4 V14 M10,12.4 V15 M13,12.4 V14 M16,12.4 V15 M19,12.4 V14 M22,12.4 V15 M25,12.4 V14 M28,12.4 V15 M31,12.4 V14" stroke="#8a6a10" stroke-width="0.7"/></g>
<g transform="translate(1191.3,103.9) scale(1.0)"><rect x="0.7" y="0.7" width="34" height="33.6" rx="1.5" fill="url(#gSky)" stroke="#4d4d4d" stroke-width="1.3"/>
<circle cx="24.6" cy="9.6" r="3.4" fill="#fdf6c8" stroke="#f3e089" stroke-width="1.2"/>
<path d="M1.4,33.6 V24 L14,15 Q17,14 19,17 L34,33.6 Z" fill="#6d727d"/>
<path d="M14,15 Q10,22 12,26 Q8,29 8,33.6 H1.4 V24 Z" fill="#555a64"/>
<path d="M18,27 L27,19 L34,25 V33.6 H24 Z" fill="#9aa3b2"/>
<rect x="0.7" y="0.7" width="34" height="33.6" rx="1.5" fill="none" stroke="#4d4d4d" stroke-width="1.3"/></g>
<g transform="translate(1264.1,105.2) scale(1.0)"><path d="M3.4,3.4 Q3.8,1 6.4,1 H29.6 Q32.2,1 32.6,3.4 L35.2,8.4 V30.6 Q35.2,33.2 32.6,33.2 H3.4 Q0.8,33.2 0.8,30.6 V8.4 Z" fill="#f3f3f5" stroke="#666b74" stroke-width="1.5" stroke-linejoin="round"/>
<path d="M0.8,8.6 H35.2" stroke="#8a8f98" stroke-width="0.9"/>
<rect x="4.6" y="12.4" width="27.2" height="17" rx="2.2" fill="#4a4d55" stroke="#2a2c30" stroke-width="1.2"/>
<path d="M10.4,21.4 H26 L29.6,27.8 H6.8 Z" fill="#f0f0f2"/>
<path d="M9.6,23.4 H27.2 M8.6,25.6 H28.4 M14,21.4 L12.4,27.8 M18.2,21.4 V27.8 M22.4,21.4 L24,27.8" stroke="#b4b6bc" stroke-width="0.5"/>
<path d="M15.2,13.4 H21.2 V18.4 L18.2,22 L15.2,18.4 Z" fill="#3f73c4" stroke="#1e3f7a" stroke-width="0.7"/>
<path d="M16.8,13.6 H19 V18.6 H16.8 Z" fill="#a9c8f2"/>
<circle cx="29.6" cy="10.4" r="1.1" fill="#168a22"/></g>
<g transform="translate(1342.5,105.6) scale(1.0)"><rect x="0.8" y="1" width="27.6" height="24.6" rx="1.5" fill="url(#gGry)" stroke="#4d4d4d" stroke-width="1.2"/>
<rect x="0.8" y="1" width="27.6" height="5.4" fill="#8d929c" stroke="#4d4d4d" stroke-width="1"/>
<path d="M4.6,10.6 L8.6,13.6 L4.6,16.6 M10.6,13.6 H15.6" fill="none" stroke="#444" stroke-width="1.2"/>
<g transform="translate(27.6,25.2)"><path d="M-1.3,-9 H1.3 L2,-6.9 L3.6,-6.2 L5.5,-7.3 L7.3,-5.5 L6.2,-3.6 L6.9,-2 L9,-1.3 V1.3 L6.9,2 L6.2,3.6 L7.3,5.5 L5.5,7.3 L3.6,6.2 L2,6.9 L1.3,9 H-1.3 L-2,6.9 L-3.6,6.2 L-5.5,7.3 L-7.3,5.5 L-6.2,3.6 L-6.9,2 L-9,1.3 V-1.3 L-6.9,-2 L-6.2,-3.6 L-7.3,-5.5 L-5.5,-7.3 L-3.6,-6.2 L-2,-6.9 Z" fill="#c9d8f4" stroke="#2f4f9a" stroke-width="1" stroke-linejoin="round"/><circle r="3.4" fill="#fff" stroke="#2f4f9a" stroke-width="0.9"/></g></g>
<g transform="translate(1427.9,103.1) scale(1.0)"><rect x="0.9" y="1.1" width="23.6" height="16.8" fill="none" stroke="#78b62c" stroke-width="1.7"/>
<path d="M24.6,18.4 L24.6,33.6 L28.2,30 L31,36 L33.6,34.8 L30.8,29 L35.6,28.8 Z" fill="#fff" stroke="#333" stroke-width="1.1" stroke-linejoin="round"/></g>
</svg>
<div id="browserhdr" class="abs"></div>
<div class="abs hdrtxt" id="brtxt" style="left:37.2px;top:176.2px">BROWSER</div>
<div id="commentshdr" class="abs"></div>
<div class="abs hdrtxt" id="cmtxt" style="left:36.8px;top:936.6px">COMMENTS</div>
<div class="abs" style="left:47.6px;top:205.7px;width:212.8px;height:23px;background:#c9c9c9"></div>
<div class="abs" style="left:50.1px;top:208.2px;width:180.6px;height:18px;background:#8d8d8d"></div>
<div class="abs" id="roottxt" style="left:116.5px;top:209.2px;font-size:13px;font-weight:bold;color:#fff;white-space:nowrap;line-height:16px">PracticeCase v6</div>
<div class="abs row" style="left:68.9px;top:234.3px;width:158.3px;height:23.3px"></div>
<div class="abs rowtxt" id="r0" style="left:108.2px;top:238.5px">Document Settings</div>
<div class="abs row" style="left:68.9px;top:262.7px;width:129.9px;height:23.3px"></div>
<div class="abs rowtxt" id="r1" style="left:108.2px;top:266.9px">Named Views</div>
<div class="abs row" style="left:68.9px;top:291.1px;width:112.1px;height:23.3px"></div>
<div class="abs rowtxt" id="r2" style="left:137.8px;top:295.3px">Origin</div>
<div class="abs row" style="left:68.9px;top:319.5px;width:135.7px;height:23.3px"></div>
<div class="abs rowtxt" id="r3" style="left:137.8px;top:323.7px">Sketches</div>
<div class="abs row" style="left:68.9px;top:348.0px;width:159.7px;height:23.3px"></div>
<div class="abs rowtxt" id="r4" style="left:137.8px;top:352.2px">Phone Body:1</div>
<div class="abs row" style="left:68.9px;top:376.4px;width:116.9px;height:23.3px"></div>
<div class="abs rowtxt" id="r5" style="left:137.8px;top:380.6px">Case:1</div>
<div class="abs row" style="left:68.9px;top:404.8px;width:159.7px;height:23.3px"></div>
<div class="abs rowtxt" id="r6" style="left:137.8px;top:409.0px">Case(Mirror):1</div>
<div class="abs row" style="left:68.9px;top:433.2px;width:183.1px;height:23.3px"></div>
<div class="abs rowtxt" id="r7" style="left:137.8px;top:437.4px">Case(Mirror) (1):1</div>
<div class="abs row" style="left:68.9px;top:461.7px;width:225.9px;height:23.3px"></div>
<div class="abs rowtxt" id="r8" style="left:137.8px;top:465.9px">Case(Mirror)(Mirror) (1):1</div>
<div class="abs row" style="left:68.9px;top:490.1px;width:178.5px;height:23.3px"></div>
<div class="abs rowtxt" id="r9" style="left:137.8px;top:494.3px">Combined Case:1</div>
<svg class="abs" style="left:0;top:165px" width="380" height="800" viewBox="0 165 380 800">
<defs>
<radialGradient id="gBulb" cx="0.4" cy="0.35" r="0.7"><stop offset="0" stop-color="#fffbd0"/><stop offset="0.5" stop-color="#f7e25a"/><stop offset="1" stop-color="#e0b820"/></radialGradient>
<radialGradient id="gBulbOff" cx="0.4" cy="0.35" r="0.7"><stop offset="0" stop-color="#ffffff"/><stop offset="0.6" stop-color="#d9e6fb"/><stop offset="1" stop-color="#9fb9e8"/></radialGradient>
<linearGradient id="gFold" x1="0" y1="0" x2="0" y2="1"><stop offset="0" stop-color="#ffffff"/><stop offset="1" stop-color="#d4d4d4"/></linearGradient>
<linearGradient id="gTri" x1="0" y1="0" x2="1" y2="1"><stop offset="0.35" stop-color="#e6e6e6"/><stop offset="0.8" stop-color="#6a6a6a"/><stop offset="1" stop-color="#222"/></linearGradient>
<g id="bulbOn"><path d="M3.2,10 H8.2 V15.2 Q5.7,18 3.2,15.2 Z" fill="#e4e4ea" stroke="#5f6475" stroke-width="1"/><circle cx="5.7" cy="5.7" r="5.4" fill="url(#gBulb)" stroke="#b59a2a" stroke-width="0.7"/></g>
<g id="bulbOff"><path d="M3.2,10 H8.2 V15.2 Q5.7,18 3.2,15.2 Z" fill="#e4e4ea" stroke="#5f6475" stroke-width="1"/><circle cx="5.7" cy="5.7" r="5.4" fill="url(#gBulbOff)" stroke="#6f8fd0" stroke-width="0.7"/></g>
<g id="folder"><path d="M0.6,2.6 H7.4 L8.6,4.6 H17.4 V15.4 H0.6 Z" fill="url(#gFold)" stroke="#555" stroke-width="1.1" stroke-linejoin="round"/><path d="M0.6,4.8 H8.6" stroke="#555" stroke-width="0.9"/></g>
<g id="body"><path d="M0.7,6 Q0.7,4.6 2,4 L6,1.2 Q7,0.6 8.4,0.6 H17 Q18.6,0.6 18.6,2.2 V12.6 Q18.6,13.6 17.6,14.4 L14,17.6 Q13.2,18.4 12,18.4 H2.2 Q0.7,18.4 0.7,17 Z" fill="#f6f6f8" stroke="#555" stroke-width="1.5"/><path d="M1.4,4.8 H12.4 Q13.4,4.8 13.4,5.8 V17.8 M13.2,5 L18,1.2" fill="none" stroke="#b4b4b8" stroke-width="0.8"/><path d="M2,5.6 H12.6 V17.6 H2 Z" fill="#e3e4ea"/></g>
<g id="gear"><path d="M7.4,0 H10.6 L11.2,2.6 L12.8,3.3 L15.1,1.9 L17.3,4.1 L15.9,6.4 L16.6,8 L19,8.6 V11.6 L16.6,12.2 L15.9,13.8 L17.3,16.1 L15.1,18.3 L12.8,16.9 L11.2,17.6 L10.6,20 H7.4 L6.8,17.6 L5.2,16.9 L2.9,18.3 L0.7,16.1 L2.1,13.8 L1.4,12.2 L-1,11.6 V8.6 L1.4,8 L2.1,6.4 L0.7,4.1 L2.9,1.9 L5.2,3.3 L6.8,2.6 Z M9,5.6 A4.4,4.4 0 1 0 9,14.4 A4.4,4.4 0 1 0 9,5.6 Z M9,7.6 A2.4,2.4 0 1 1 9,12.4 A2.4,2.4 0 1 1 9,7.6 Z" fill="#5e5e5e" fill-rule="evenodd"/></g>
</defs>
<path d="M16.4,181.6 V188.4 L11,185 Z M22.6,181.6 V188.4 L17.2,185 Z" fill="#2e2e2e"/>
<circle cx="340.6" cy="184.5" r="5.5" fill="#2a2a2a"/><rect x="337.4" y="183.6" width="6.4" height="1.8" fill="#d4d4d4"/>
<path d="M355.4,178 V191 M357.6,180 V189" stroke="#9a9a9a" stroke-width="1"/>
<circle cx="340.6" cy="944.8" r="5.5" fill="#2a2a2a"/><path d="M337.4,944.8 H343.8 M340.6,941.6 V948" stroke="#d4d4d4" stroke-width="1.7"/>
<path d="M355.4,938 V951 M357.6,940 V949" stroke="#9a9a9a" stroke-width="1"/>
<path d="M37.6,210.4 V223 H25 Z" fill="url(#gTri)" stroke="#2e2e2e" stroke-width="1.5" stroke-linejoin="round"/>
<use href="#bulbOn" x="54.6" y="209.6"/>
<g transform="translate(80.4,207.6)"><path d="M0.8,3.4 Q0.8,2.4 1.6,1.8 L3.4,0.8 Q4,0.4 5,0.4 H10.6 Q12,0.4 12,1.8 V8 H17.6 Q19,8 19,9.4 V15 Q19,16 18.2,16.6 L16.4,18.2 Q15.8,18.8 14.8,18.8 H2.2 Q0.8,18.8 0.8,17.4 Z" fill="#fbfbfc" stroke="#5a5f6a" stroke-width="1.3" stroke-linejoin="round"/><path d="M1.4,3.6 H8.4 Q9,3.6 9,4.2 V18.4 M9,4 L11.6,1 M9,11 H15.4 Q16,11 16,11.6 V18.2 M16,11 L18.6,8.6 M1,11.2 H8.6" fill="none" stroke="#b4b7c0" stroke-width="0.8"/><path d="M9.6,11.6 H15.4 V18 H9.6 Z M1.6,4.2 H8.4 V18 H1.6 Z" fill="#eceef2"/></g>
<circle cx="243.2" cy="217.6" r="6.7" fill="#f4f4f4" stroke="#3a3a3a" stroke-width="1.3"/><circle cx="243.2" cy="217.6" r="2.9" fill="#2e2e2e"/>
<path d="M48.2,238.8 L57.4,245.8 L48.2,252.8 Z" fill="#e6e6e6" stroke="#444" stroke-width="1.9" stroke-linejoin="round"/>
<use href="#gear" x="72.7" y="235.7"/>
<path d="M48.2,267.2 L57.4,274.2 L48.2,281.2 Z" fill="#e6e6e6" stroke="#444" stroke-width="1.9" stroke-linejoin="round"/>
<use href="#folder" x="72.2" y="264.9"/>
<path d="M48.2,295.6 L57.4,302.6 L48.2,309.6 Z" fill="#e6e6e6" stroke="#444" stroke-width="1.9" stroke-linejoin="round"/>
<use href="#bulbOff" x="75.4" y="294.2"/>
<use href="#folder" x="102" y="293.3"/>
<path d="M48.2,324.0 L57.4,331.0 L48.2,338.0 Z" fill="#e6e6e6" stroke="#444" stroke-width="1.9" stroke-linejoin="round"/>
<use href="#bulbOn" x="75.4" y="322.6"/>
<use href="#folder" x="102" y="321.7"/>
<path d="M48.2,352.5 L57.4,359.5 L48.2,366.5 Z" fill="#e6e6e6" stroke="#444" stroke-width="1.9" stroke-linejoin="round"/>
<use href="#bulbOn" x="75.4" y="351.1"/>
<use href="#body" x="101.6" y="349.6"/>
<path d="M48.2,380.9 L57.4,387.9 L48.2,394.9 Z" fill="#e6e6e6" stroke="#444" stroke-width="1.9" stroke-linejoin="round"/>
<use href="#bulbOn" x="75.4" y="379.5"/>
<use href="#body" x="101.6" y="378.0"/>
<g transform="translate(0,395.4) skewX(-42)"><path d="M99.4,0 H181.5" stroke="#5b7fb5" stroke-width="3.3" stroke-dasharray="2.5 4.55" fill="none"/></g>
<path d="M48.2,409.3 L57.4,416.3 L48.2,423.3 Z" fill="#e6e6e6" stroke="#444" stroke-width="1.9" stroke-linejoin="round"/>
<use href="#bulbOn" x="75.4" y="407.9"/>
<use href="#body" x="101.6" y="406.4"/>
<g transform="translate(0,423.8) skewX(-42)"><path d="M99.4,0 H223.7" stroke="#5b7fb5" stroke-width="3.3" stroke-dasharray="2.5 4.55" fill="none"/></g>
<path d="M48.2,437.7 L57.4,444.7 L48.2,451.7 Z" fill="#e6e6e6" stroke="#444" stroke-width="1.9" stroke-linejoin="round"/>
<use href="#bulbOn" x="75.4" y="436.3"/>
<use href="#body" x="101.6" y="434.8"/>
<g transform="translate(0,452.2) skewX(-42)"><path d="M99.4,0 H244.2" stroke="#5b7fb5" stroke-width="3.3" stroke-dasharray="2.5 4.55" fill="none"/></g>
<path d="M48.2,466.2 L57.4,473.2 L48.2,480.2 Z" fill="#e6e6e6" stroke="#444" stroke-width="1.9" stroke-linejoin="round"/>
<use href="#bulbOn" x="75.4" y="464.8"/>
<use href="#body" x="101.6" y="463.3"/>
<g transform="translate(0,480.7) skewX(-42)"><path d="M99.4,0 H286.8" stroke="#5b7fb5" stroke-width="3.3" stroke-dasharray="2.5 4.55" fill="none"/></g>
<path d="M48.2,494.6 L57.4,501.6 L48.2,508.6 Z" fill="#e6e6e6" stroke="#444" stroke-width="1.9" stroke-linejoin="round"/>
<use href="#bulbOn" x="75.4" y="493.2"/>
<use href="#body" x="101.6" y="491.7"/>
</svg>
<svg class="abs" style="left:1680px;top:110px" width="140" height="120" viewBox="1680 110 140 120">
<defs>
<linearGradient id="gVcT" x1="0" y1="0" x2="0" y2="1"><stop offset="0" stop-color="#ececec"/><stop offset="1" stop-color="#e4e4e4"/></linearGradient>
<linearGradient id="gVcB" x1="0" y1="0" x2="0" y2="1"><stop offset="0" stop-color="#e9e9e9"/><stop offset="1" stop-color="#d6d6d6"/></linearGradient>
<filter id="fSh" x="-30%" y="-30%" width="160%" height="170%"><feGaussianBlur stdDeviation="5"/></filter>
</defs>
<path d="M1712,166 H1778 L1774,208 H1712 Z" fill="#9a9a9a" opacity="0.55" filter="url(#fSh)"/>
<path d="M1716.5,128 Q1716.5,125 1719.6,125 H1767 Q1771,125 1772.6,129.6 L1779.6,162 H1716.5 Z" fill="url(#gVcT)" stroke="#a6a6a6" stroke-width="0.9" stroke-dasharray="6 3.4"/>
<path d="M1716.5,162 H1779.6 L1773.6,204.6 H1716.5 Z" fill="url(#gVcB)"/>
<path d="M1716.5,162 V204.6" stroke="#9c9c9c" stroke-width="1" stroke-dasharray="6 3.4" fill="none"/>
<rect x="1727.7" y="154.6" width="40.3" height="15.9" fill="#e2e3e8"/>
<path d="M1716.5,162 H1780" stroke="#9a9a9a" stroke-width="1.6" stroke-dasharray="12 6.4" fill="none"/>
<path d="M1716.5,204.2 H1773" stroke="#9c9c9c" stroke-width="1" stroke-dasharray="6 3.4" fill="none"/>
<text x="1746.6" y="189.2" text-anchor="middle" font-family="Liberation Sans, sans-serif" font-weight="bold" font-size="11.8" letter-spacing="0.15" fill="#8e9099">BACK</text>
<g transform="translate(1746.2,142.8) rotate(180) scale(1,0.8)"><text x="0" y="4.2" text-anchor="middle" font-family="Liberation Sans, sans-serif" font-weight="bold" font-size="11.6" letter-spacing="0.7" fill="#8e9099">TOP</text></g>
<path d="M1707.8,206.8 L1714.6,206.4 L1716.6,205.4 H1773.6" fill="none" stroke="#e8504f" stroke-width="2.2"/>
<path d="M1773.8,205.4 L1784.4,152.4" fill="none" stroke="#5fe35f" stroke-width="2.4" stroke-dasharray="4.6 0.7"/>
<text x="1694.4" y="212" font-family="Liberation Sans, sans-serif" font-size="17.8" font-weight="bold" fill="#f88" textLength="8.8" lengthAdjust="spacingAndGlyphs">X</text>
<text x="1780.2" y="152.3" font-family="Liberation Sans, sans-serif" font-size="17" font-weight="bold" fill="#86f286" textLength="8.4" lengthAdjust="spacingAndGlyphs">Y</text>
</svg>
<div id="dialog" class="abs"></div>
<div class="abs" style="left:1486px;top:301px;width:294px;height:27.6px;background:rgba(206,206,206,0.75);border-bottom:1px solid #bcbcbc"></div>
<div class="abs" style="left:1486px;top:506.6px;width:294px;height:1px;background:#bdbdbd"></div>
<div class="abs" style="left:1486px;top:507.6px;width:294px;height:41.4px;background:rgba(200,200,200,0.3)"></div>
<div class="abs dlabel" id="dh" style="left:1516.5px;top:306.4px;color:#5a5a5a">EDIT FEATURE</div>
<div class="abs dlabel" id="d0" style="left:1497.6px;top:337.0px;color:#3a3a3a">Target Body</div>
<div class="abs dlabel" id="d1" style="left:1497.6px;top:367.9px;color:#3a3a3a">Tool Bodies</div>
<div class="abs dlabel" id="d2" style="left:1497.6px;top:399.1px;color:#3a3a3a">Operation</div>
<div class="abs dlabel" id="d3" style="left:1497.6px;top:429.7px;color:#b0b0b0">New Component</div>
<div class="abs dlabel" id="d4" style="left:1497.6px;top:460.3px;color:#3a3a3a">Keep Tools</div>
<div class="abs" style="left:1610.8px;top:331.5px;width:91.6px;height:26.5px;background:#5b8cb7"></div>
<div class="abs" style="left:1610.8px;top:362.4px;width:91.6px;height:26.5px;background:#cfcfcf"></div>
<div class="abs" style="left:1610.8px;top:393px;width:153.7px;height:26.5px;background:#cecece"></div>
<div class="abs dlabel" id="s1" style="left:1634px;top:337px;color:#fff">1 selected</div>
<div class="abs dlabel" id="s3" style="left:1634px;top:367.9px;color:#4a4a4a">3 selected</div>
<div class="abs dlabel" id="jn" style="left:1636.2px;top:399.1px;color:#3a3a3a">Join</div>
<div class="abs" style="left:1607.5px;top:518.2px;width:69.5px;height:21.2px;background:linear-gradient(#5e95c8,#3a6da3);border:1px solid #3f6f9f"></div>
<div class="abs" style="left:1690.1px;top:518.2px;width:70.3px;height:21.2px;background:#ececec;border:1px solid #c6c6c6"></div>
<div class="abs" id="okt" style="left:1631.6px;top:520.2px;font-size:15px;color:#fff;line-height:18px;white-space:nowrap">OK</div>
<div class="abs" id="cnt" style="left:1701.8px;top:520.2px;font-size:15px;color:#4a4a4a;line-height:18px;white-space:nowrap">Cancel</div>
<svg class="abs" style="left:1485px;top:300px" width="296" height="250" viewBox="1485 300 296 250">
<circle cx="1497.3" cy="314.3" r="5.5" fill="#2a2a2a"/><rect x="1494.1" y="313.4" width="6.4" height="1.8" fill="#d7d7d7"/>
<path d="M1618,336.6 V351 L1621.4,348 L1623.8,353.4 L1625.8,352.4 L1623.4,347.2 L1628,346.8 Z" fill="#fff" stroke="#2a2a2a" stroke-width="0.9" stroke-linejoin="round"/>
<path d="M1618,367.5 V381.9 L1621.4,378.9 L1623.8,384.3 L1625.8,383.3 L1623.4,378.1 L1628,377.7 Z" fill="#fff" stroke="#2a2a2a" stroke-width="0.9" stroke-linejoin="round"/>
<path d="M1715,339.8 L1724,349.4 M1724,339.8 L1715,349.4" stroke="#333" stroke-width="2" fill="none"/>
<path d="M1715,370.7 L1724,380.3 M1724,370.7 L1715,380.3" stroke="#333" stroke-width="2" fill="none"/>
<rect x="1617" y="397.6" width="10.6" height="10" fill="#5b9ad6" stroke="#2a2a2a" stroke-width="1.1"/>
<path d="M1613.4,407.6 H1631.2 V416.4 H1613.4 Z" fill="#5b9ad6" stroke="#2a2a2a" stroke-width="1.2"/>
<path d="M1751.6,404 H1758.6 L1755.1,408.4 Z" fill="#2e2e2e"/>
<rect x="1614.6" y="429.8" width="14.6" height="14.2" rx="2.5" fill="#e6e6e6" stroke="#b4b4b4" stroke-width="1.1"/>
<path d="M1617.6,437.6 L1620.6,441 L1626.4,432.6" fill="none" stroke="#b0b0b0" stroke-width="1.4"/>
<rect x="1614.6" y="460.4" width="14.6" height="14.2" rx="2.5" fill="#f4f4f4" stroke="#3e3e3e" stroke-width="1.2"/>
<path d="M1617.6,468.2 L1620.6,471.6 L1626.4,463.2" fill="none" stroke="#222" stroke-width="1.5"/>
</svg>
<div class="abs" style="left:763.9px;top:932.1px;width:171.7px;height:27.7px;background:#c9c9c9"></div>
<div class="abs" style="left:943.2px;top:932.1px;width:110.6px;height:27.7px;background:#c9c9c9"></div>
<svg class="abs" style="left:760px;top:930px" width="300" height="32" viewBox="760 930 300 32">
<defs><linearGradient id="gMon" x1="0" y1="0" x2="0" y2="1"><stop offset="0" stop-color="#a9c6ee"/><stop offset="1" stop-color="#7ea6dc"/></linearGradient></defs>
<ellipse cx="776.4" cy="946.3" rx="4.1" ry="9.2" fill="none" stroke="#565e6c" stroke-width="1.5"/>
<path d="M771.6,942.6 Q767,944.2 768.2,946.8 Q770,950 777.6,949.8 Q785.6,949.4 786.6,946 Q787,943.6 783.6,942.4" fill="none" stroke="#565e6c" stroke-width="1.5"/>
<path d="M777.4,938.6 L781,939.4 L779,942.2 Z M781.4,941.2 L784.8,942.6 L782.4,945 Z" fill="#333"/>
<path d="M776.4,943.4 L778.8,945.8 L776.4,948.2 L774,945.8 Z" fill="#2f8fee"/>
<path d="M792.9,943.1999999999999 H799.4 L796.15,947.8 Z" fill="#2e2e2e"/>
<path d="M808.4,942.8 L813.4,937.4 L815.4,940.4 L821.4,937.8 L821.8,942.8 Z" fill="#8a8f9a" stroke="#555" stroke-width="0.9" stroke-linejoin="round"/>
<rect x="807.2" y="942.6" width="18.4" height="12.6" rx="1.2" fill="#f4f4f4" stroke="#4a4a4a" stroke-width="1.5"/>
<rect x="810.8" y="946.8" width="11" height="5.4" fill="#a9afc0" stroke="#444" stroke-width="1"/>
<path d="M841,945 Q838.6,942.6 838.2,944.6 L842.4,952 Q844,955.4 848,955.4 H851.6 Q855,953 855.6,946 Q856,943.4 854,943.4 V946 V941.6 Q853,939.8 851.4,941.4 V945 V939.6 Q850,938 848.4,939.6 V945 V940.6 Q846.8,939.4 845.4,941 V949 Z" fill="#fff" stroke="#444" stroke-width="1" stroke-linejoin="round"/>
<circle cx="874.6" cy="944.6" r="5.6" fill="#eef3fa" stroke="#555" stroke-width="1.3"/>
<path d="M878.8,948.8 L883.4,953.6" stroke="#333" stroke-width="2.6" stroke-linecap="round"/>
<path d="M882,939.4 H887.4 M884.7,936.8 V942 M882,944.4 H887.4" stroke="#333" stroke-width="1.1"/>
<rect x="899.4" y="937" width="18" height="17.6" fill="none" stroke="#555" stroke-width="1" stroke-dasharray="2 1.6"/>
<circle cx="907" cy="944" r="7.2" fill="#eef3fa" stroke="#555" stroke-width="1.4"/>
<path d="M912.4,949.6 L917.2,954.6" stroke="#333" stroke-width="2.8" stroke-linecap="round"/>
<path d="M924,943.1999999999999 H930.9 L927.45,947.8 Z" fill="#2e2e2e"/>
<rect x="948.4" y="937.4" width="17.4" height="13.6" rx="1" fill="#f2f2f2" stroke="#555" stroke-width="1.2"/>
<rect x="950.6" y="939.6" width="13" height="9.2" fill="url(#gMon)" stroke="#4a6ea8" stroke-width="0.8"/>
<path d="M955,951 H959.4 V953 H961.6 V954.4 H952.8 V953 H955 Z" fill="#e8e8e8" stroke="#555" stroke-width="0.8"/>
<path d="M969.4,943.1999999999999 H975.8 L972.5999999999999,947.8 Z" fill="#2e2e2e"/>
<rect x="984.8" y="936.8" width="17.8" height="17.8" fill="#fff" stroke="#555" stroke-width="1.2"/>
<path d="M987.6,936.8 V954.6 M990.6,936.8 V954.6 M993.6,936.8 V954.6 M996.6,936.8 V954.6 M999.6,936.8 V954.6 M984.8,939.8 H1002.6 M984.8,942.8 H1002.6 M984.8,945.8 H1002.6 M984.8,948.8 H1002.6 M984.8,951.8 H1002.6" stroke="#666" stroke-width="1.35"/>
<path d="M1005.6,943.1999999999999 H1012.4 L1009.0,947.8 Z" fill="#2e2e2e"/>
<rect x="1021.6" y="937.4" width="16.8" height="16.4" rx="1" fill="#b9cff0" stroke="#3d66b0" stroke-width="1.3"/>
<path d="M1030,937.4 V953.8 M1021.6,945.6 H1038.4" stroke="#3d66b0" stroke-width="1.6"/>
<path d="M1023.4,939.2 H1028.4 V944 H1023.4 Z M1031.6,939.2 H1036.6 V944 H1031.6 Z M1023.4,947.2 H1028.4 V952 H1023.4 Z M1031.6,947.2 H1036.6 V952 H1031.6 Z" fill="#8fb0e6"/>
<path d="M1042.3,943.1999999999999 H1049.2 L1045.75,947.8 Z" fill="#2e2e2e"/>
</svg>
<div class="abs" id="pb1" style="left:1653.8px;top:938.2px;font-size:13px;font-weight:bold;color:#3e3e3e;line-height:16px;white-space:nowrap">Phone Body:1</div>
<div id="timeline" class="abs"></div>
<div id="bottomstrip" class="abs"></div>
<svg class="abs" style="left:0;top:964px" width="1820" height="57" viewBox="0 964 1820 57">
<defs>
<g id="tbox"><path d="M0.7,6 Q0.7,4.6 2,4 L6,1.2 Q7,0.6 8.4,0.6 H17 Q18.6,0.6 18.6,2.2 V12.6 Q18.6,13.6 17.6,14.4 L14,17.6 Q13.2,18.4 12,18.4 H2.2 Q0.7,18.4 0.7,17 Z" fill="#f6f6f8" stroke="#6a6a6a" stroke-width="1.4"/><path d="M1.4,4.8 H12.4 Q13.4,4.8 13.4,5.8 V17.8 M13.2,5 L18,1.2" fill="none" stroke="#b0b0b0" stroke-width="0.8"/><path d="M2,5.6 H12.6 V17.6 H2 Z" fill="#e3e4ea"/></g>
<g id="tsketch"><rect x="0.8" y="1.2" width="17.6" height="17.4" fill="#f4f6fa" stroke="#1a1a1a" stroke-width="1.6"/><path d="M1.6,18 V12 L9,18 Z" fill="#7db0ea"/><path d="M1.6,18 V14.6 H17.6 V18 Z" fill="#a9c9ee"/><path d="M4.6,4.4 V14.8 H14.6" fill="none" stroke="#1a1a1a" stroke-width="1.8"/><path d="M6.6,13.2 L8.2,9.2 L16.6,0.6 L19.2,3.2 L10.6,11.6 Z" fill="#f7cf2a" stroke="#b88a12" stroke-width="0.5"/><path d="M6.6,13.2 L8.2,9.2 L10.6,11.6 Z" fill="#e2996a"/><path d="M6.6,13.2 L7.3,11.4 L8.4,12.5 Z" fill="#222"/></g>
<g id="textrude"><path d="M0.6,3.4 L3.4,0.8 H12.6 V15.6 L9.8,18.4 H0.6 Z" fill="#a9c5ea" stroke="#555" stroke-width="1" stroke-linejoin="round"/><path d="M9.8,3.4 L12.6,0.8 V15.6 L9.8,18.4 Z" fill="#7d9fd2"/><path d="M0.6,3.4 L3.4,0.8 H12.6 L9.8,3.4 Z" fill="#d4e2f5"/><path d="M0.6,14.6 H9.8 L12.6,12 V15.6 L9.8,18.4 H0.6 Z" fill="#e3e6ee" opacity="0.9"/><path d="M0.6,3.4 H9.8 V18.4 M9.8,3.4 L12.6,0.8" fill="none" stroke="#555" stroke-width="0.8"/><path d="M16.4,17.6 V4" stroke="#333" stroke-width="1.2"/><path d="M14.2,6.8 L16.4,1.6 L18.6,6.8 Z" fill="#333"/></g>
<g id="tfillet"><path d="M0.7,6 L5.6,1 H12 Q18.4,2 18.4,8 V14.4 L14,18.4 H0.7 Z" fill="#e6e8ee" stroke="#555" stroke-width="1.1" stroke-linejoin="round"/><path d="M14,18.4 V11.4 L18.4,8 V14.4 Z" fill="#b5b9c5"/><path d="M7.6,4.4 Q14,5 14,11.4 L18.4,8 Q18.4,2 12,1 Z" fill="#8fb2e2" stroke="#555" stroke-width="0.8" stroke-linejoin="round"/><path d="M0.7,6 H7 Q14,6 14,11.4 V18.4" fill="none" stroke="#555" stroke-width="0.9"/></g>
<g id="tcombine"><path d="M6.6,3.4 L9.6,0.8 H18.6 V8.4 L15.6,11 H6.6 Z" fill="#9dbdea" stroke="#3d5f9a" stroke-width="1.1" stroke-linejoin="round"/><path d="M15.6,3.4 L18.6,0.8 V8.4 L15.6,11 Z" fill="#7d9fd2"/><path d="M0.7,10.4 L3.7,7.8 H12.7 V15.6 L9.7,18.4 H0.7 Z" fill="#9dbdea" stroke="#3d5f9a" stroke-width="1.1" stroke-linejoin="round"/><path d="M9.7,10.4 L12.7,7.8 V15.6 L9.7,18.4 Z" fill="#7d9fd2"/><path d="M0.7,10.4 H9.7 V18.4 M6.6,3.4 H15.6 V11" fill="none" stroke="#3d5f9a" stroke-width="0.8"/></g>
<g id="tmirror"><path d="M0.5,4.5 L4.4,0.3 L7.7,2.5 V16.8 L4.6,14.9 L3.4,17.8 L0.5,15.7 Z" fill="#f2f3f6" stroke="#3a3a3a" stroke-width="1.2" stroke-linejoin="round"/><path d="M4.8,8.4 L7.4,6.4 V16 L4.8,14.4 Z" fill="#8c8f98"/><path d="M17.5,4.5 L13.6,0.3 L10.3,2.5 V16.8 L13.4,14.9 L14.6,17.8 L17.5,15.7 Z" fill="#a9c6ee" stroke="#2f4f8a" stroke-width="1.2" stroke-linejoin="round"/><path d="M13.2,8.4 L10.6,6.4 V16 L13.2,14.4 Z" fill="#5d82c0"/><path d="M9,-0.4 V18.6" stroke="#333" stroke-width="1.1"/></g>
<g id="tmove"><circle cx="13.6" cy="10.6" r="4.6" fill="#9dbdea" stroke="#3d5f9a" stroke-width="1.1"/><path d="M9.4,10.6 H4" stroke="#111" stroke-width="2.4"/><path d="M0,10.6 L5.8,6 V15.2 Z" fill="#111"/></g>
</defs>
<g fill="#4f4f4f"><rect x="12.9" y="985.6" width="2.1" height="16.4"/><path d="M27.3,985.6 V1002 L16.2,993.8 Z"/><path d="M52.4,985.6 V1002 L41.6,993.8 Z"/><rect x="54.8" y="990" width="2.2" height="7.6"/><path d="M72.4,984.6 V1003.2 L86,993.9 Z"/><rect x="100.5" y="990" width="2.2" height="7.6"/><path d="M105,985.6 V1002 L115.8,993.8 Z"/><path d="M131.6,985.6 V1002 L142.6,993.8 Z"/><rect x="143.8" y="985.6" width="2.1" height="16.4"/></g>
<use href="#tbox" x="172.7" y="985.8"/>
<use href="#tsketch" x="201.1" y="985.8"/>
<use href="#textrude" x="229.5" y="985.8"/>
<use href="#tsketch" x="258.0" y="985.8"/>
<use href="#textrude" x="286.4" y="985.8"/>
<use href="#tfillet" x="314.9" y="985.8"/>
<use href="#tfillet" x="343.3" y="985.8"/>
<use href="#tbox" x="371.7" y="985.8"/>
<use href="#tsketch" x="400.2" y="985.8"/>
<use href="#textrude" x="428.6" y="985.8"/>
<use href="#tfillet" x="457.1" y="985.8"/>
<use href="#tcombine" x="485.5" y="985.8"/>
<use href="#tmirror" x="513.9" y="985.8"/>
<use href="#tmirror" x="542.4" y="985.8"/>
<use href="#tsketch" x="570.8" y="985.8"/>
<use href="#textrude" x="599.3" y="985.8"/>
<use href="#tmove" x="627.7" y="985.8"/>
<use href="#tmirror" x="656.1" y="985.8"/>
<use href="#tbox" x="684.6" y="985.8"/>
<use href="#tcombine" x="713.0" y="985.8"/>
<path d="M712.9,996 L716.1,993 H725.1 V1001 L722.1,1003.8 H712.9 Z M718.9,989 L721.9,986.2 H731.1 V993.8 L728.1,996.4" fill="none" stroke="#2f66c8" stroke-width="1.8" stroke-linejoin="round"/>
<use href="#tfillet" x="741.5" y="985.8" opacity="0.32"/>
<use href="#tfillet" x="769.9" y="985.8" opacity="0.32"/>
<use href="#tfillet" x="798.3" y="985.8" opacity="0.32"/>
<use href="#tfillet" x="826.8" y="985.8" opacity="0.32"/>
<use href="#tsketch" x="855.2" y="985.8" opacity="0.32"/>
<use href="#textrude" x="883.6" y="985.8" opacity="0.32"/>
<use href="#tsketch" x="912.1" y="985.8" opacity="0.32"/>
<use href="#textrude" x="940.5" y="985.8" opacity="0.32"/>
<use href="#tfillet" x="969.0" y="985.8" opacity="0.32"/>
<use href="#tfillet" x="997.4" y="985.8" opacity="0.32"/>
<path d="M183.5,1009.4 V1015 M210.7,1009.4 V1015 M239.2,1009.4 V1015 M267.6,1009.4 V1015 M296.1,1009.4 V1015 M324.5,1009.4 V1015 M352.9,1009.4 V1015 M381.4,1009.4 V1015 M409.8,1009.4 V1015 M438.3,1009.4 V1015 M466.7,1009.4 V1015 M495.1,1009.4 V1015 M523.6,1009.4 V1015 M552.0,1009.4 V1015 M580.5,1009.4 V1015 M608.9,1009.4 V1015 M637.3,1009.4 V1015 M665.8,1009.4 V1015 M694.2,1009.4 V1015 M722.7,1009.4 V1015 M751.1,1009.4 V1015 M779.5,1009.4 V1015 M808.0,1009.4 V1015 M836.4,1009.4 V1015 M864.9,1009.4 V1015 M893.3,1009.4 V1015 M921.7,1009.4 V1015 M950.2,1009.4 V1015 M978.6,1009.4 V1015 M1007.1,1009.4 V1015" stroke="#555" stroke-width="1.6" fill="none"/>
<path d="M182.7,1015 H1007.9" stroke="#555" stroke-width="2" fill="none"/>
<path d="M371.0,980.6 L376.2,975.4 M378.0,980.6 L383.2,975.4 M385.0,980.6 L390.2,975.4" stroke="#444" stroke-width="2.5" fill="none"/>
<path d="M427.9,980.6 L433.1,975.4 M434.9,980.6 L440.1,975.4 M441.9,980.6 L447.1,975.4" stroke="#444" stroke-width="2.5" fill="none"/>
<path d="M729.8,978.8 H743.9 V982.6 L738.2,989.6 V1015.6 H735.6 V989.6 L729.8,982.6 Z" fill="#555"/>
<g transform="translate(1790.8,984.4) scale(0.93)"><path d="M7.4,0 H10.6 L11.2,2.6 L12.8,3.3 L15.1,1.9 L17.3,4.1 L15.9,6.4 L16.6,8 L19,8.6 V11.6 L16.6,12.2 L15.9,13.8 L17.3,16.1 L15.1,18.3 L12.8,16.9 L11.2,17.6 L10.6,20 H7.4 L6.8,17.6 L5.2,16.9 L2.9,18.3 L0.7,16.1 L2.1,13.8 L1.4,12.2 L-1,11.6 V8.6 L1.4,8 L2.1,6.4 L0.7,4.1 L2.9,1.9 L5.2,3.3 L6.8,2.6 Z M9,5.4 A4.6,4.6 0 1 0 9,14.6 A4.6,4.6 0 1 0 9,5.4 Z M9,7.8 A2.2,2.2 0 1 1 9,12.2 A2.2,2.2 0 1 1 9,7.8 Z" fill="#555" fill-rule="evenodd"/></g>
</svg>

</body>
</html>
